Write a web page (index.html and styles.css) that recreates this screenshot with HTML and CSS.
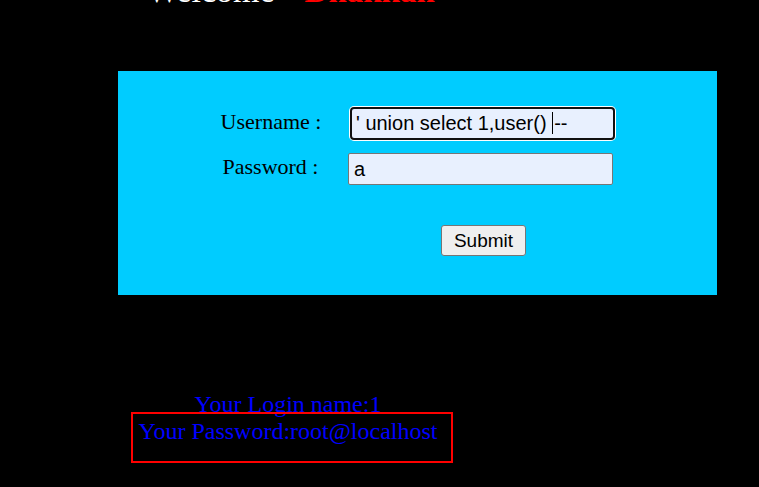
FILE: index.html
```html
<!DOCTYPE html>
<html>
<head>
<meta charset="utf-8">
<link rel="stylesheet" href="styles.css">
</head>
<body>
<div class="welcome"><span class="w1">Welcome</span><span class="w2">Dhakkan</span></div>
<div class="panel">
  <div class="row">
    <div class="label">Username :</div>
    <div class="field"><div class="input focused">' union select 1,user() <span class="caret"></span>--</div></div>
  </div>
  <div class="row row2">
    <div class="label">Password :</div>
    <div class="field"><div class="input">a</div></div>
  </div>
  <div class="btnrow"><div class="btn">Submit</div></div>
</div>
<div class="result">
  <div class="login">Your Login name:1</div>
  <div class="pass">Your Password:root@localhost</div>
</div>
<div class="mark"></div>
</body>
</html>
```
FILE: styles.css
```css
html, body {
  margin: 0;
  padding: 0;
  background: #000;
  width: 759px;
  height: 487px;
  overflow: hidden;
}
body {
  position: relative;
  font-family: "Liberation Serif", serif;
}
.welcome {
  margin-top: -26px;
  height: 33px;
  line-height: 33px;
  font-size: 34px;
  padding-left: 147px;
  white-space: nowrap;
}
.w1 { color: #fff; }
.w2 { color: #ff0000; font-weight: bold; margin-left: 30px; font-size: 33px; }
.panel {
  margin-top: 64px;
  margin-left: 118px;
  width: 599px;
  height: 224px;
  box-sizing: border-box;
  background: #00ccff;
  padding-top: 36px;
}
.row {
  display: flex;
  align-items: center;
  height: 33px;
}
.row2 { margin-top: 13px; height: 32px; }
.label {
  width: 156px;
  margin-left: 75px;
  text-align: center;
  font-size: 22px;
  line-height: 26px;
  color: #000;
  position: relative;
  top: -2px;
}
.row2 .label { width: 155px; }
.input {
  box-sizing: border-box;
  width: 265px;
  height: 32px;
  background: #e8f0fe;
  border: 1px solid #767676;
  border-radius: 2px;
  font-family: "Liberation Sans", sans-serif;
  font-size: 20px;
  line-height: 30px;
  padding-left: 5px;
  color: #000;
  white-space: nowrap;
}
.input.focused {
  width: 265px;
  height: 33px;
  border: 2px solid #101010;
  border-radius: 4px;
  box-shadow: 0 0 0 1px #fff;
  padding-left: 4px;
  line-height: 29px;
  margin-left: 1px;
}
.caret {
  display: inline-block;
  width: 1px;
  height: 22px;
  background: #000;
  vertical-align: -4px;
  margin-right: 1px;
}
.btnrow {
  margin-top: 40px;
  padding-left: 323px;
}
.btn {
  box-sizing: border-box;
  width: 85px;
  height: 31px;
  background: #efefef;
  border: 1px solid #767676;
  border-radius: 3px;
  font-family: "Liberation Sans", sans-serif;
  font-size: 19px;
  line-height: 29px;
  text-align: center;
  color: #000;
}
.result {
  margin-top: 96px;
  margin-left: 118px;
  width: 340px;
  text-align: center;
  color: #0000ff;
  font-size: 24px;
  line-height: 27px;
}
.mark {
  position: absolute;
  left: 131px;
  top: 412px;
  width: 322px;
  height: 51px;
  box-sizing: border-box;
  border: 2px solid #ff0000;
}
```
